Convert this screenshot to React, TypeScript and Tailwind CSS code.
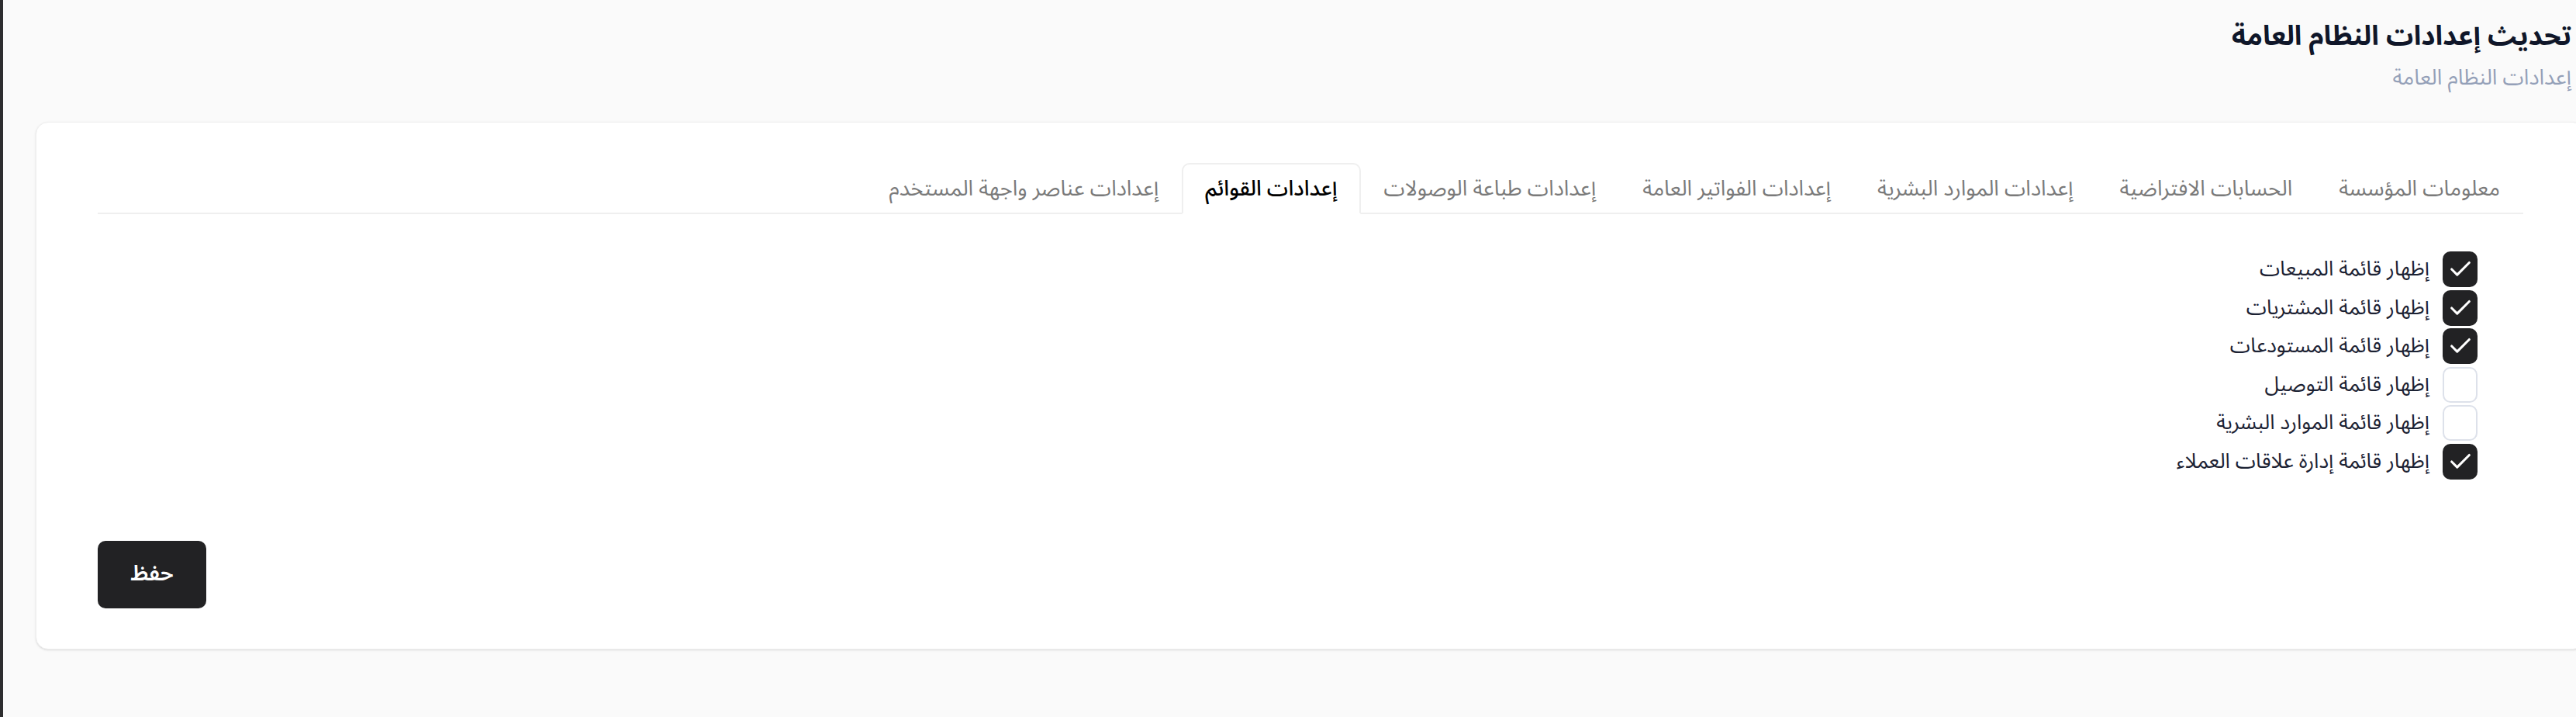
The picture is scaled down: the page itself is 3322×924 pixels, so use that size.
import React from 'react';

const tabs = [
  'معلومات المؤسسة',
  'الحسابات الافتراضية',
  'إعدادات الموارد البشرية',
  'إعدادات الفواتير العامة',
  'إعدادات طباعة الوصولات',
  'إعدادات القوائم',
  'إعدادات عناصر واجهة المستخدم',
];

const menus = [
  { label: 'إظهار قائمة المبيعات', checked: true },
  { label: 'إظهار قائمة المشتريات', checked: true },
  { label: 'إظهار قائمة المستودعات', checked: true },
  { label: 'إظهار قائمة التوصيل', checked: false },
  { label: 'إظهار قائمة الموارد البشرية', checked: false },
  { label: 'إظهار قائمة إدارة علاقات العملاء', checked: true },
];

const CheckIcon = () => (
  <svg width="34" height="34" viewBox="0 0 24 24" fill="none" stroke="white" strokeWidth="2.2" strokeLinecap="round" strokeLinejoin="round">
    <polyline points="20 6 9 17 4 12" />
  </svg>
);

const App = () => {
  return (
    <div
      className="w-full h-[924px] overflow-hidden bg-[#fafafa] flex"
      style={{ fontFamily: '"Noto Sans Arabic", "Noto Sans", "DejaVu Sans", sans-serif' }}
    >
      {/* شريط جانبي */}
      <div className="w-[4px] shrink-0 bg-[#2d2d2f]"></div>

      <div className="flex-1 min-w-0 -mr-[54px]">
        <div dir="rtl" className="px-[42px]">
          {/* العنوان */}
          <div className="pt-[20px] pr-[18px]">
            <h1 className="text-[35px] leading-[54px] font-bold text-[#0f1629]">تحديث إعدادات النظام العامة</h1>
            <p className="mt-[6px] text-[27.5px] leading-[40px] text-[#94a0b8]">إعدادات النظام العامة</p>
          </div>

          {/* البطاقة */}
          <div className="mt-[37px] bg-white rounded-[16px] border border-[#efefef] shadow-sm px-[79px] pt-[52px] pb-[52px]">
            {/* التبويبات */}
            <div className="flex border-b-2 border-[#efefef]">
              {tabs.map((tab, i) => {
                const active = i === 5;
                return (
                  <div
                    key={tab}
                    className={`h-[66px] px-[28px] flex items-center text-[27.5px] leading-[40px] whitespace-nowrap border-2 rounded-t-[10px] -mb-[2px] ${
                      active
                        ? 'bg-white border-[#efefef] border-b-white text-black font-medium'
                        : 'border-transparent text-[#7a7a7a]'
                    }`}
                  >
                    {tab}
                  </div>
                );
              })}
            </div>

            {/* القوائم */}
            <div className="pt-[48px] pr-[59px] flex flex-col gap-[3.6px]">
              {menus.map((m) => (
                <div key={m.label} className="h-[46px] flex items-center gap-[17px]">
                  <div
                    className={`w-[45px] h-[46px] shrink-0 rounded-[10px] flex items-center justify-center ${
                      m.checked ? 'bg-[#222224]' : 'bg-white border-2 border-[#dde1ea]'
                    }`}
                  >
                    {m.checked && <CheckIcon />}
                  </div>
                  <span className="text-[26.5px] leading-[40px] text-[#1c2233]">{m.label}</span>
                </div>
              ))}
            </div>

            {/* زر الحفظ */}
            <div className="mt-[79px] flex justify-end">
              <button className="w-[140px] h-[87px] rounded-[10px] bg-[#222224] text-white text-[28px] leading-[40px] font-semibold">
                حفظ
              </button>
            </div>
          </div>
        </div>
      </div>
    </div>
  );
};

export default App;
